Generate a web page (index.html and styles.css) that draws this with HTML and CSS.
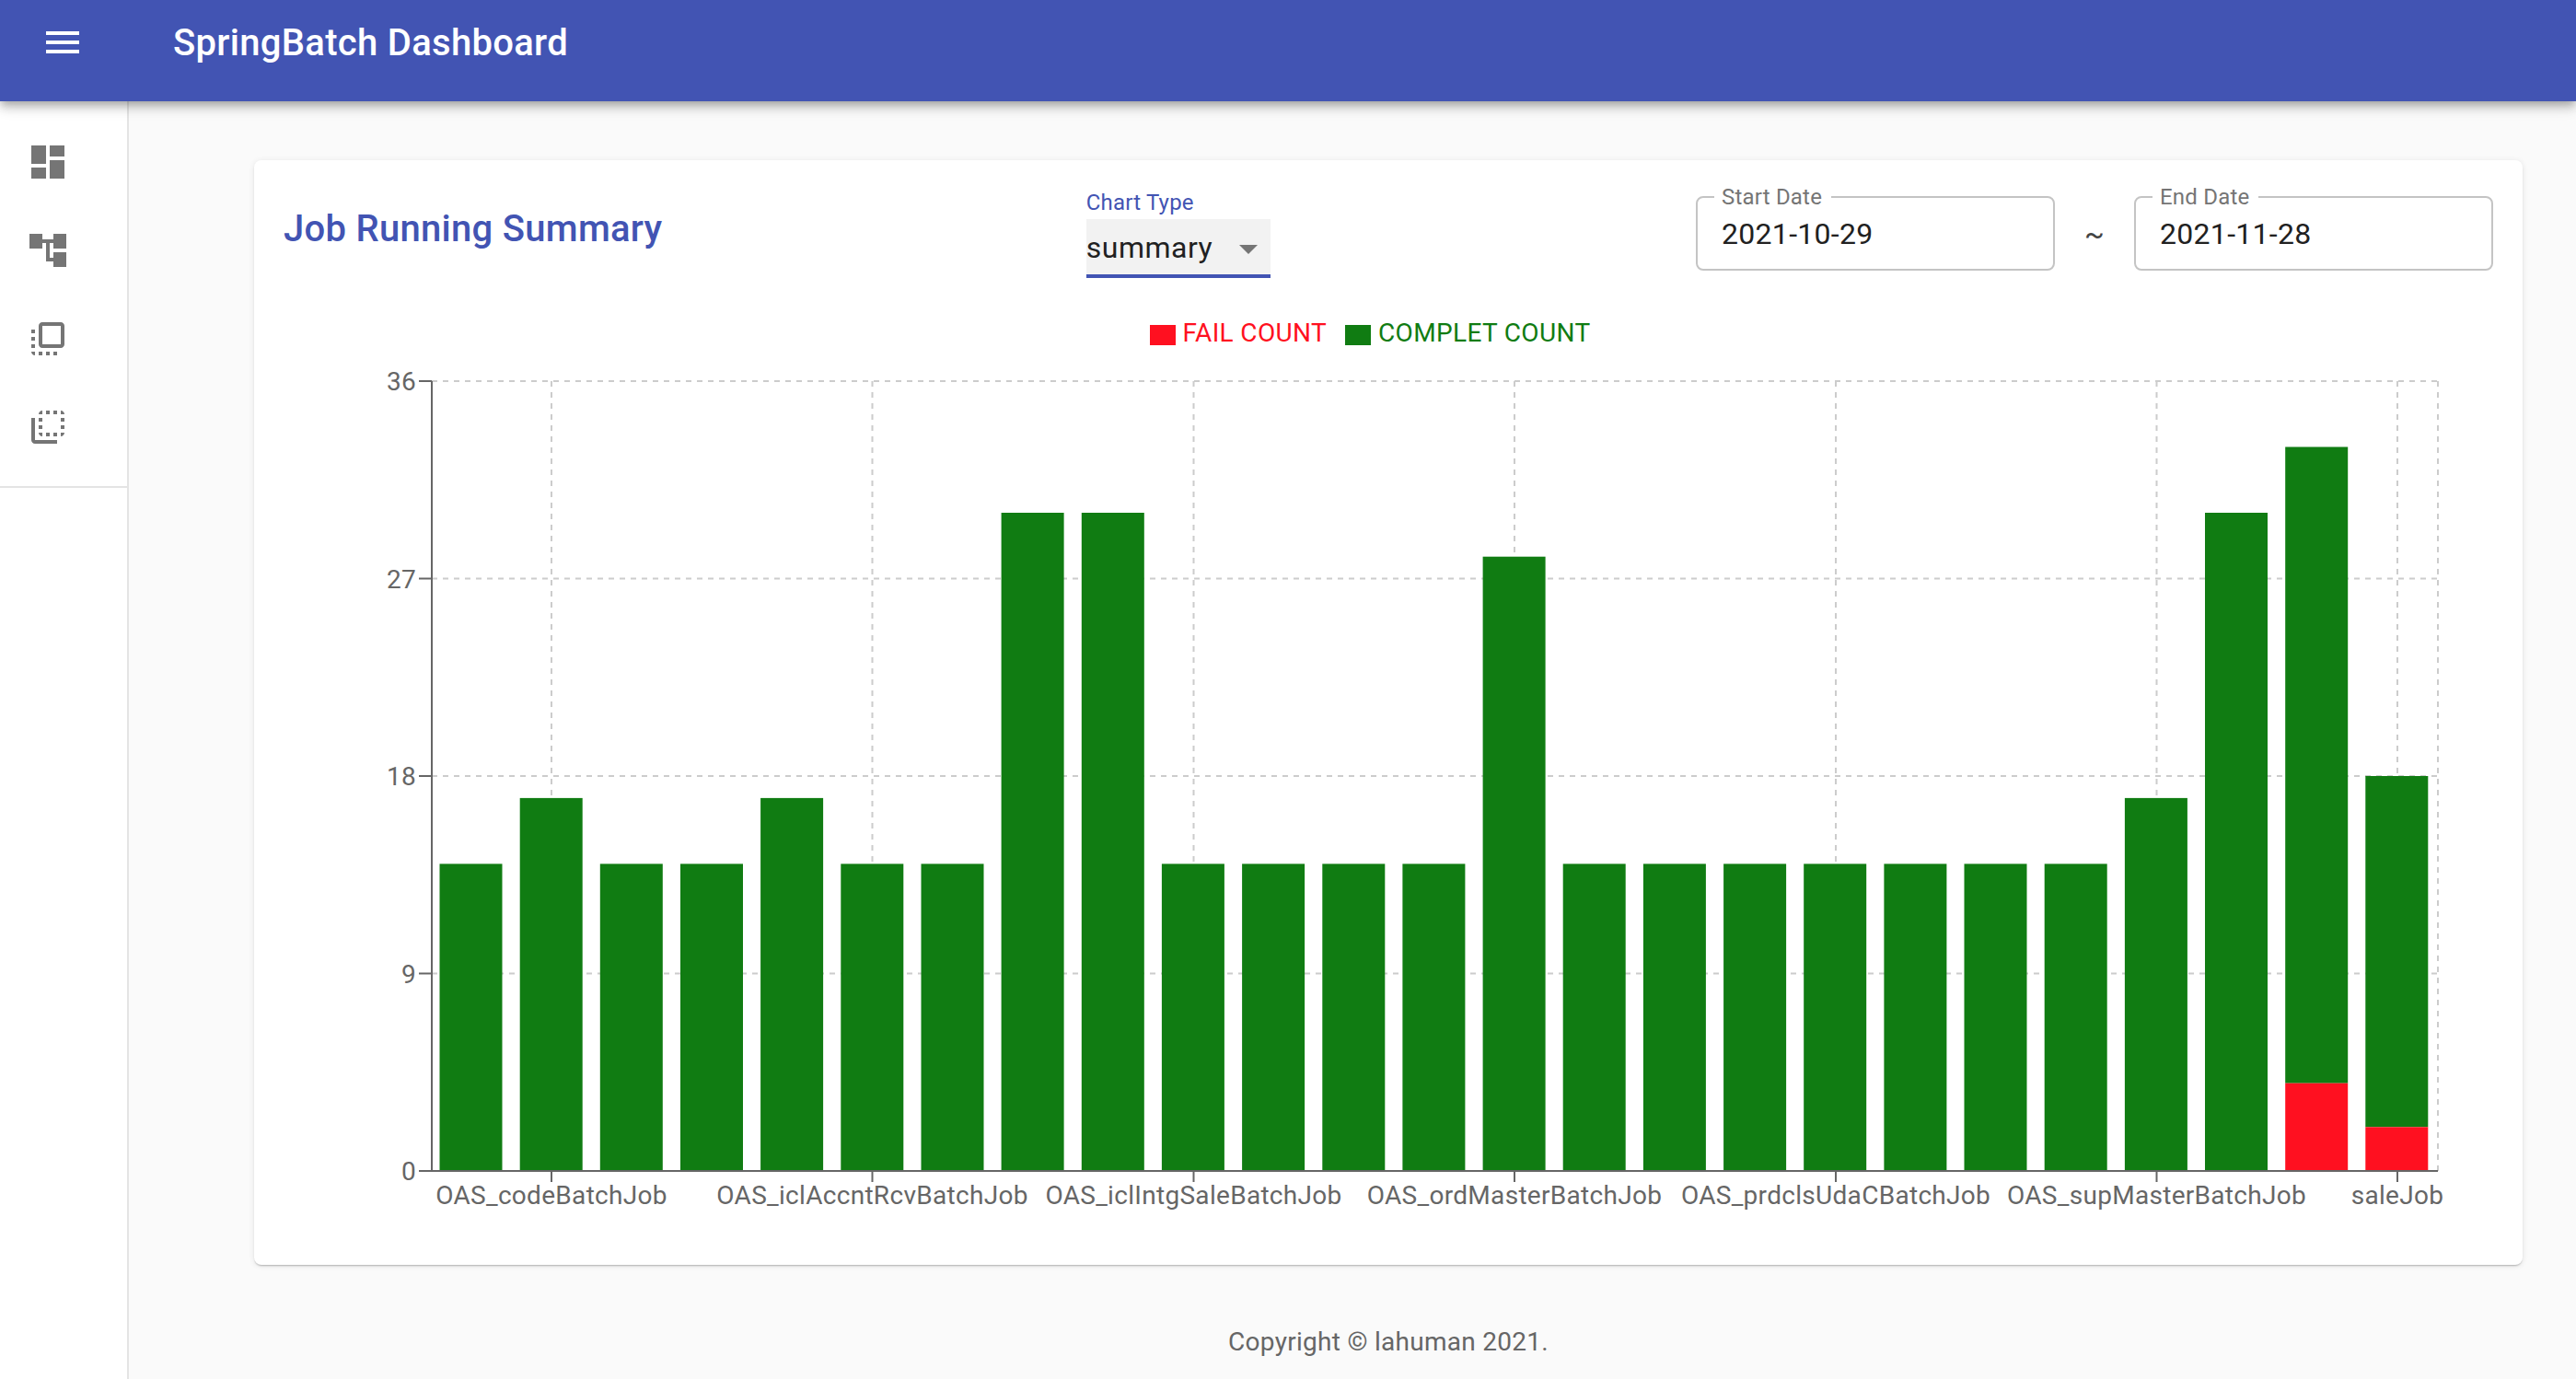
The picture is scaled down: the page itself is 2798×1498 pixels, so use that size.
FILE: index.html
```html
<!DOCTYPE html>
<html lang="en">
<head>
  <meta charset="UTF-8">
  <meta name="viewport" content="width=device-width, initial-scale=1.0">
  <title>SpringBatch Dashboard</title>
  <link rel="stylesheet" href="styles.css">
</head>
<body>
  <header class="appbar">
    <svg class="icon menu-icon" viewBox="0 0 24 24"><path d="M3 18h18v-2H3v2zm0-5h18v-2H3v2zm0-7v2h18V6H3z"/></svg>
    <h1 class="appbar-title">SpringBatch Dashboard</h1>
  </header>

  <div class="layout">
    <nav class="sidebar">
      <ul class="nav-list">
        <li class="nav-item"><svg class="icon" viewBox="0 0 24 24"><path d="M3 13h8V3H3v10zm0 8h8v-6H3v6zm10 0h8V11h-8v10zm0-18v6h8V3h-8z"/></svg></li>
        <li class="nav-item"><svg class="icon" viewBox="0 0 24 24"><path d="M22 11V3h-7v3H9V3H2v8h7V8h2v10h4v3h7v-8h-7v3h-2V8h2v3z"/></svg></li>
        <li class="nav-item"><svg class="icon" viewBox="0 0 24 24"><path d="M3 13h2v-2H3v2zm0 4h2v-2H3v2zm2 4v-2H3c0 1.1.89 2 2 2zM3 9h2V7H3v2zm12 12h2v-2h-2v2zm4-18H9c-1.11 0-2 .9-2 2v10c0 1.1.89 2 2 2h10c1.1 0 2-.9 2-2V5c0-1.1-.9-2-2-2zm0 12H9V5h10v10zm-8 6h2v-2h-2v2zm-4 0h2v-2H7v2z"/></svg></li>
        <li class="nav-item"><svg class="icon" viewBox="0 0 24 24"><path d="M9 7H7v2h2V7zm0 4H7v2h2v-2zm0-8c-1.11 0-2 .9-2 2h2V3zm4 12h-2v2h2v-2zm6-12v2h2c0-1.1-.9-2-2-2zm-6 0h-2v2h2V3zM9 17v-2H7c0 1.1.89 2 2 2zm10-4h2v-2h-2v2zm0-4h2V7h-2v2zm0 8c1.1 0 2-.9 2-2h-2v2zM5 7H3v12c0 1.1.89 2 2 2h12v-2H5V7zm10-2h2V3h-2v2zm0 12h2v-2h-2v2z"/></svg></li>
      </ul>
    </nav>

    <main class="content">
      <section class="card">
        <div class="card-head">
          <h2 class="card-title">Job Running Summary</h2>

          <div class="select-field">
            <label class="select-label">Chart Type</label>
            <div class="select-box">
              <span>summary</span>
              <span class="select-arrow"></span>
            </div>
          </div>

          <div class="date-range">
            <fieldset class="date-field">
              <legend class="date-label">Start Date</legend>
              <span class="date-value">2021-10-29</span>
            </fieldset>
            <span class="tilde">~</span>
            <fieldset class="date-field">
              <legend class="date-label">End Date</legend>
              <span class="date-value">2021-11-28</span>
            </fieldset>
          </div>
        </div>

        <div class="legend">
          <span class="legend-item fail"><i class="swatch"></i>FAIL COUNT</span>
          <span class="legend-item complete"><i class="swatch"></i>COMPLET COUNT</span>
        </div>

        <!-- viewBox uses page coordinates, same numbers as the plot area -->
        <svg class="chart" viewBox="276 390 2464 984">
          <g class="grid">
            <line x1="469" y1="414" x2="2648" y2="414"/>
            <line x1="469" y1="628.5" x2="2648" y2="628.5"/>
            <line x1="469" y1="843" x2="2648" y2="843"/>
            <line x1="469" y1="1057.5" x2="2648" y2="1057.5"/>
            <line x1="599" y1="414" x2="599" y2="1272"/>
            <line x1="947.5" y1="414" x2="947.5" y2="1272"/>
            <line x1="1296.5" y1="414" x2="1296.5" y2="1272"/>
            <line x1="1645" y1="414" x2="1645" y2="1272"/>
            <line x1="1994" y1="414" x2="1994" y2="1272"/>
            <line x1="2342.5" y1="414" x2="2342.5" y2="1272"/>
            <line x1="2604" y1="414" x2="2604" y2="1272"/>
            <line x1="2648" y1="414" x2="2648" y2="1272"/>
          </g>

          <g class="bars-complete">
            <rect x="477.5" y="938.4" width="68" height="333.6"/>
            <rect x="564.7" y="866.9" width="68" height="405.1"/>
            <rect x="651.8" y="938.4" width="68" height="333.6"/>
            <rect x="739" y="938.4" width="68" height="333.6"/>
            <rect x="826.1" y="866.9" width="68" height="405.1"/>
            <rect x="913.3" y="938.4" width="68" height="333.6"/>
            <rect x="1000.5" y="938.4" width="68" height="333.6"/>
            <rect x="1087.6" y="557" width="68" height="715"/>
            <rect x="1174.8" y="557" width="68" height="715"/>
            <rect x="1261.9" y="938.4" width="68" height="333.6"/>
            <rect x="1349.1" y="938.4" width="68" height="333.6"/>
            <rect x="1436.3" y="938.4" width="68" height="333.6"/>
            <rect x="1523.4" y="938.4" width="68" height="333.6"/>
            <rect x="1610.6" y="604.7" width="68" height="667.3"/>
            <rect x="1697.7" y="938.4" width="68" height="333.6"/>
            <rect x="1784.9" y="938.4" width="68" height="333.6"/>
            <rect x="1872.1" y="938.4" width="68" height="333.6"/>
            <rect x="1959.2" y="938.4" width="68" height="333.6"/>
            <rect x="2046.4" y="938.4" width="68" height="333.6"/>
            <rect x="2133.5" y="938.4" width="68" height="333.6"/>
            <rect x="2220.7" y="938.4" width="68" height="333.6"/>
            <rect x="2307.9" y="866.9" width="68" height="405.1"/>
            <rect x="2395" y="557" width="68" height="715"/>
            <rect x="2482.2" y="485.5" width="68" height="691.2"/>
            <rect x="2569.3" y="843" width="68" height="381.3"/>
          </g>
          <g class="bars-fail">
            <rect x="2482.2" y="1176.7" width="68" height="95.3"/>
            <rect x="2569.3" y="1224.3" width="68" height="47.7"/>
          </g>

          <g class="axis">
            <line x1="469" y1="414" x2="469" y2="1272"/>
            <line x1="455" y1="1272" x2="2648" y2="1272"/>
            <line x1="455" y1="414" x2="469" y2="414"/>
            <line x1="455" y1="628.5" x2="469" y2="628.5"/>
            <line x1="455" y1="843" x2="469" y2="843"/>
            <line x1="455" y1="1057.5" x2="469" y2="1057.5"/>
            <line x1="599" y1="1272" x2="599" y2="1284"/>
            <line x1="947.5" y1="1272" x2="947.5" y2="1284"/>
            <line x1="1296.5" y1="1272" x2="1296.5" y2="1284"/>
            <line x1="1645" y1="1272" x2="1645" y2="1284"/>
            <line x1="1994" y1="1272" x2="1994" y2="1284"/>
            <line x1="2342.5" y1="1272" x2="2342.5" y2="1284"/>
            <line x1="2604" y1="1272" x2="2604" y2="1284"/>
          </g>

          <g class="tick-labels y-labels">
            <text x="452" y="424">36</text>
            <text x="452" y="638.5">27</text>
            <text x="452" y="853">18</text>
            <text x="452" y="1067.5">9</text>
            <text x="452" y="1282">0</text>
          </g>
          <g class="tick-labels x-labels">
            <text x="599" y="1308">OAS_codeBatchJob</text>
            <text x="947.5" y="1308">OAS_iclAccntRcvBatchJob</text>
            <text x="1296.5" y="1308">OAS_iclIntgSaleBatchJob</text>
            <text x="1645" y="1308">OAS_ordMasterBatchJob</text>
            <text x="1994" y="1308">OAS_prdclsUdaCBatchJob</text>
            <text x="2342.5" y="1308">OAS_supMasterBatchJob</text>
            <text x="2604" y="1308">saleJob</text>
          </g>
        </svg>
      </section>

      <footer class="copyright">Copyright © lahuman 2021.</footer>
    </main>
  </div>
</body>
</html>
```

FILE: styles.css
```css
* {
  box-sizing: border-box;
}

html, body {
  height: 100%;
}

body {
  margin: 0;
  display: flex;
  flex-direction: column;
  overflow: hidden;
  font-family: Roboto, Arial, sans-serif;
  background-color: #fafafa;
  color: #212121;
}

.icon {
  display: block;
  width: 48px;
  height: 48px;
  fill: #757575;
}

/* app bar */
.appbar {
  position: relative;
  z-index: 2;
  flex: none;
  display: flex;
  align-items: center;
  height: 110px;
  padding: 0 0 18px 44px;
  background-color: #4254b3;
  color: white;
  box-shadow: 0 4px 8px -2px rgba(0, 0, 0, 0.2), 0 8px 10px 0 rgba(0, 0, 0, 0.14), 0 2px 20px 0 rgba(0, 0, 0, 0.12);
}

.menu-icon {
  fill: white;
}

.appbar-title {
  margin: 0 0 0 96px;
  font-size: 40px;
  font-weight: 500;
  letter-spacing: 0.3px;
}

/* sidebar + content */
.layout {
  flex: 1;
  display: flex;
  min-height: 0;
}

.sidebar {
  flex: none;
  width: 140px;
  background-color: white;
  border-right: 2px solid #e4e4e4;
}

.nav-list {
  margin: 0;
  padding: 18px 0 16px;
  list-style: none;
  border-bottom: 2px solid #e4e4e4;
}

.nav-item {
  display: flex;
  align-items: center;
  height: 96px;
  padding-left: 28px;
}

.content {
  flex: 1;
  min-width: 0;
  padding: 64px 58px 0 136px;
}

/* card */
.card {
  height: 1200px;
  padding: 32px 0 0;
  background-color: white;
  border-radius: 8px;
  box-shadow: 0 2px 2px -1px rgba(0, 0, 0, 0.25), 0 1px 6px 0 rgba(0, 0, 0, 0.1);
}

.card-head {
  display: flex;
  justify-content: space-between;
  align-items: flex-start;
  height: 128px;
  padding: 0 32px;
}

.card-title {
  margin: 19px 0 0;
  font-size: 40px;
  font-weight: 500;
  letter-spacing: 0.28px;
  color: #4254b3;
}

.select-field {
  margin-right: 2px;
}

.select-label {
  display: block;
  height: 32px;
  font-size: 24px;
  line-height: 28px;
  letter-spacing: 0.2px;
  color: #4254b3;
}

.select-box {
  position: relative;
  width: 200px;
  height: 64px;
  padding-top: 8px;
  font-size: 32px;
  line-height: 46px;
  letter-spacing: 0.5px;
  background-color: #f2f2f2;
  border-bottom: 4px solid #4254b3;
}

.select-arrow {
  position: absolute;
  top: 28px;
  right: 14px;
  border-left: 10px solid transparent;
  border-right: 10px solid transparent;
  border-top: 10px solid #757575;
}

.date-range {
  display: flex;
  align-items: flex-start;
}

.date-field {
  width: 390px;
  height: 94px;
  margin: -6px 0 0;
  padding: 0 26px;
  border: 2px solid #c4c4c4;
  border-radius: 8px;
}

.date-label {
  padding: 0 10px 0 8px;
  margin-left: -8px;
  font-size: 24px;
  line-height: 28px;
  letter-spacing: 0.2px;
  color: #757575;
}

.date-value {
  display: block;
  margin-top: 4px;
  font-size: 32px;
  line-height: 44px;
  letter-spacing: 0.3px;
}

.tilde {
  width: 86px;
  padding-top: 26px;
  text-align: center;
  font-size: 32px;
  line-height: 44px;
  color: #444;
}

/* chart */
.legend {
  display: flex;
  justify-content: center;
  align-items: flex-start;
  gap: 20px;
  height: 56px;
  padding: 12px 40px 0 0;
  font-size: 28px;
  line-height: 32px;
  letter-spacing: 0.35px;
}

.legend-item {
  display: flex;
  align-items: center;
}

.swatch {
  width: 28px;
  height: 22px;
  margin: 4px 8px 0 0;
}

.fail {
  color: #ff1020;
}

.complete {
  color: #107c12;
}

.fail .swatch {
  background-color: #ff1020;
}

.complete .swatch {
  background-color: #107c12;
}

.chart {
  display: block;
  width: 2464px;
  height: 984px;
}

.grid line {
  stroke: #cccccc;
  stroke-width: 2;
  stroke-dasharray: 6 6;
}

.bars-complete rect {
  fill: #107c12;
}

.bars-fail rect {
  fill: #ff1020;
}

.axis line {
  stroke: #666666;
  stroke-width: 2;
}

.tick-labels text {
  font-size: 28px;
  letter-spacing: 0.3px;
  fill: #666666;
}

.y-labels text {
  text-anchor: end;
}

.x-labels text {
  text-anchor: middle;
}

.copyright {
  margin-top: 66px;
  text-align: center;
  font-size: 28px;
  line-height: 36px;
  letter-spacing: 0.28px;
  color: #666;
}
```
